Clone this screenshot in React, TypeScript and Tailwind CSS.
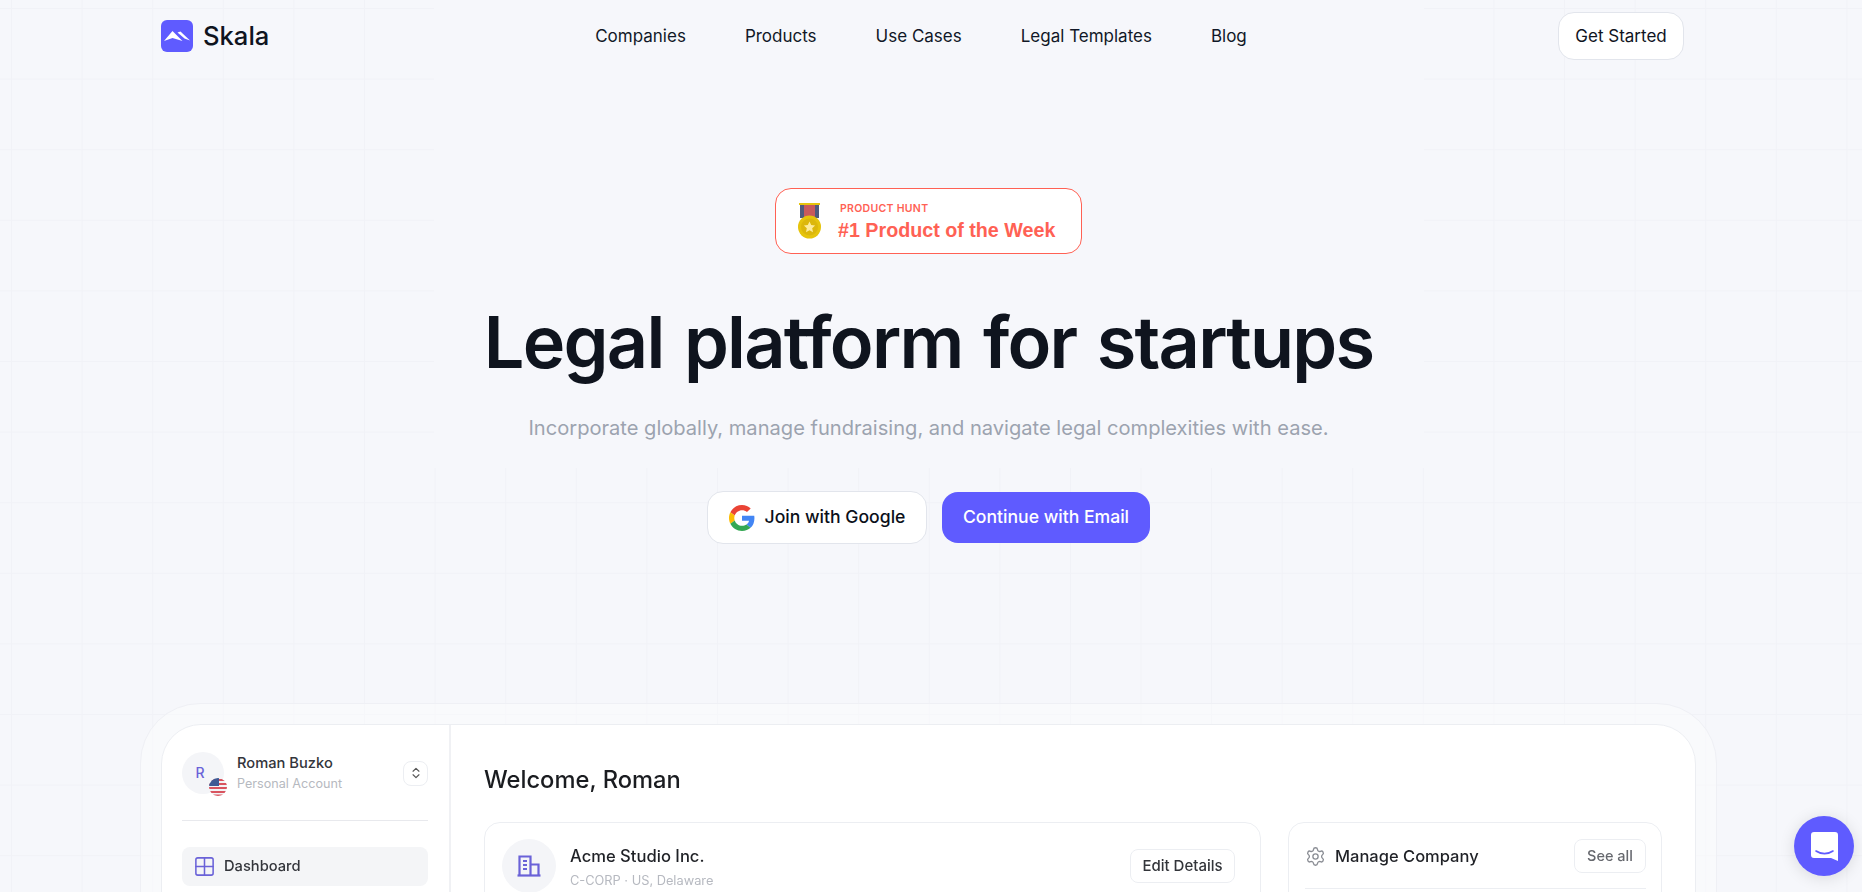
import { ChevronsUpDown, Grid2x2, Settings } from "lucide-react";

const navLinks = ["Companies", "Products", "Use Cases", "Legal Templates", "Blog"];

function Logo() {
  return (
    <svg width="32" height="32" viewBox="0 0 32 32">
      <rect width="32" height="32" rx="6" fill="#5f5bff" />
      <path d="M3 21 L11.5 11 L21.5 21 L11.5 18 Z" fill="#fff" />
      <path d="M16.5 12.5 L19.5 11.5 L29 20.5 L23.5 18.5 Z" fill="#fff" />
    </svg>
  );
}

function Medal() {
  return (
    <svg width="24" height="36" viewBox="0 0 24 36">
      <rect x="1" y="0" width="21" height="2" fill="#e6c40c" />
      <rect x="2" y="2" width="19" height="13" fill="#4f5b7d" />
      <rect x="6" y="2" width="11" height="13" fill="#c95a5c" />
      <circle cx="11.5" cy="24" r="11.5" fill="#e6c40c" />
      <circle cx="11.5" cy="24" r="8.5" fill="#dcb70b" />
      <path d="M11.5 18.5l1.7 3.6 3.9.5-2.9 2.7.8 3.9-3.5-2-3.5 2 .8-3.9-2.9-2.7 3.9-.5z" fill="#fdeb9a" />
    </svg>
  );
}

function GoogleIcon() {
  return (
    <svg width="26" height="26" viewBox="0 0 48 48">
      <path fill="#EA4335" d="M24 9.5c3.54 0 6.71 1.22 9.21 3.6l6.85-6.85C35.9 2.38 30.47 0 24 0 14.62 0 6.51 5.38 2.56 13.22l7.98 6.19C12.43 13.72 17.74 9.5 24 9.5z" />
      <path fill="#4285F4" d="M46.98 24.55c0-1.57-.15-3.09-.38-4.55H24v9.02h12.94c-.58 2.96-2.26 5.48-4.78 7.18l7.73 6c4.51-4.18 7.09-10.36 7.09-17.65z" />
      <path fill="#FBBC05" d="M10.53 28.59c-.48-1.45-.76-2.99-.76-4.59s.27-3.14.76-4.59l-7.98-6.19C.92 16.46 0 20.12 0 24c0 3.88.92 7.54 2.56 10.78l7.97-6.19z" />
      <path fill="#34A853" d="M24 48c6.48 0 11.93-2.13 15.89-5.81l-7.73-6c-2.15 1.45-4.92 2.3-8.16 2.3-6.26 0-11.57-4.22-13.47-9.91l-7.98 6.19C6.51 42.62 14.62 48 24 48z" />
    </svg>
  );
}

function Flag() {
  return (
    <svg width="18" height="18" viewBox="0 0 18 18">
      <defs>
        <clipPath id="flag-clip">
          <circle cx="9" cy="9" r="9" />
        </clipPath>
      </defs>
      <g clipPath="url(#flag-clip)">
        <rect width="18" height="18" fill="#f3f4f6" />
        <rect y="1" width="18" height="2" fill="#d9545f" />
        <rect y="5" width="18" height="2" fill="#d9545f" />
        <rect y="9" width="18" height="2" fill="#d9545f" />
        <rect y="13" width="18" height="2" fill="#d9545f" />
        <rect y="16.5" width="18" height="2" fill="#d9545f" />
        <rect width="10" height="8" fill="#3f5a94" />
      </g>
    </svg>
  );
}

function CompanyIcon() {
  return (
    <svg width="24" height="22" viewBox="0 0 24 22" fill="none" stroke="#6a62d8" strokeWidth="2.2">
      <path d="M2.5 21V1.5h11V21" />
      <path d="M13.5 9.5h8V21" />
      <path d="M0.5 20.5h23" />
      <path d="M6 6h4M6 10h4M6 14h4" />
    </svg>
  );
}

export default function App() {
  return (
    <div className="relative h-[892px] overflow-hidden bg-[#f6f7fb] font-['Inter',sans-serif] text-[#0f141e]">
      {/* faint grid behind everything, the block behind the hero text has none */}
      <div className="absolute inset-0 bg-[linear-gradient(to_right,#f1f2f7_1px,transparent_1px),linear-gradient(to_bottom,#f1f2f7_1px,transparent_1px)] bg-[size:70.6px_70.6px] bg-[position:11px_8px]" />
      <div className="absolute left-[434px] top-0 h-[468px] w-[990px] bg-[#f6f7fb]" />

      <div className="relative">
        <header className="flex items-center justify-between h-[72px] pl-[161px] pr-[178px]">
          <div className="flex items-center gap-[10px] w-[297px]">
            <Logo />
            <span className="text-[25.6px] font-medium leading-none">Skala</span>
          </div>
          <nav className="flex items-center gap-[59px] pt-[1px] text-[17px] text-[#111827]">
            {navLinks.map((link) => (
              <a key={link}>{link}</a>
            ))}
          </nav>
          <div className="w-[300px] flex justify-end">
            <button className="h-12 w-[126px] rounded-2xl border border-[#e2e5ec] bg-white pt-[1px] text-[17px]">Get Started</button>
          </div>
        </header>

        <section className="flex flex-col items-center pt-[116px] pr-[5px]">
          <div className="flex items-center h-[66px] w-[307px] rounded-2xl border border-[#ff6154] bg-white pl-[22px]">
            <Medal />
            <div className="ml-[16px] pt-[4px]">
              <div className="ml-[2px] text-[10.5px] font-semibold leading-none tracking-[0.3px] text-[#ff6154]">PRODUCT HUNT</div>
              <div className="mt-[4px] font-['Liberation_Sans',sans-serif] text-[19.7px] font-bold leading-6 text-[#ff6154]">
                #1 Product of the Week
              </div>
            </div>
          </div>

          <h1 className="mt-[48px] text-[72px] font-semibold leading-[80px] tracking-[-1.75px] [word-spacing:4px] text-[#0f141e] [font-feature-settings:'liga'_0,'calt'_0]">
            Legal platform for startups
          </h1>
          <p className="mt-[32px] text-[20.1px] leading-7 text-[#9ca3af]">
            Incorporate globally, manage fundraising, and navigate legal complexities with ease.
          </p>

          <div className="mt-[49px] flex items-center gap-[15px]">
            <button className="flex items-center justify-center gap-[10px] h-[53px] w-[220px] rounded-2xl border border-[#e2e5ec] bg-white text-[17.6px] font-medium text-[#0b0f19]">
              <GoogleIcon />
              Join with Google
            </button>
            <button className="h-[51px] w-[208px] rounded-2xl bg-[#5f5bff] text-[17.6px] font-medium text-white">Continue with Email</button>
          </div>
        </section>

        <section className="mt-[159px] ml-[140px] w-[1577px] rounded-t-[60px] border border-[#eff0f5] bg-white/40 p-5">
          <div className="flex h-[400px] rounded-t-[40px] border border-[#eceef2] bg-white blur-[0.6px]">
            <aside className="w-[289px] border-r-2 border-[#f0f1f4] pl-[20px] pr-[21px] pt-[27px]">
              <div className="flex items-center pb-[26px] border-b border-[#e8e9ed]">
                <div className="relative flex h-[42px] w-[42px] items-center justify-center rounded-full bg-[#f4f5f8] pr-[6px] text-sm font-medium text-[#6a62d8]">
                  R
                  <span className="absolute -bottom-[2px] right-[-3px]">
                    <Flag />
                  </span>
                </div>
                <div className="ml-[13px] flex-1">
                  <div className="text-[14.7px] font-medium leading-5 text-[#33353b]">Roman Buzko</div>
                  <div className="text-[12.6px] leading-[21px] text-[#b6b9c0]">Personal Account</div>
                </div>
                <div className="flex h-[25px] w-[25px] items-center justify-center rounded-lg border border-[#eceef2]">
                  <ChevronsUpDown size={14} className="text-[#555]" />
                </div>
              </div>
              <div className="mt-[26px] flex h-[39px] items-center gap-[8px] rounded-lg bg-[#f4f5f7] px-[11px] text-[14.7px] font-medium text-[#33353b]">
                <Grid2x2 size={23} strokeWidth={1.6} className="text-[#6a62d8]" />
                Dashboard
              </div>
            </aside>

            <main className="flex-1 px-[33px] pt-[39px]">
              <h2 className="text-[23.7px] font-medium leading-8 text-[#1a1c20]">Welcome, Roman</h2>
              <div className="mt-[26px] flex gap-[27px]">
                <div className="flex w-[777px] h-[200px] rounded-2xl border border-[#eceef2] pl-[17px] pr-[25px] pt-[16px]">
                  <div className="flex h-[54px] w-[54px] items-center justify-center rounded-full bg-[#f4f5f8]">
                    <CompanyIcon />
                  </div>
                  <div className="ml-[14px] mt-[5px] flex-1">
                    <div className="text-[16.6px] font-medium leading-6 text-[#1f2126]">Acme Studio Inc.</div>
                    <div className="mt-[3px] text-[12.8px] leading-5 text-[#b6b9c0]">C-CORP · US, Delaware</div>
                  </div>
                  <button className="mt-[10px] h-[34px] w-[105px] rounded-lg border border-[#eceef2] text-[15px] font-medium text-[#33353a]">
                    Edit Details
                  </button>
                </div>

                <div className="w-[374px] h-[200px] rounded-2xl border border-[#eceef2] pl-[16px] pr-[15px] pt-[16px]">
                  <div className="flex items-center border-b border-[#eceef2] pb-[15px]">
                    <Settings size={21} strokeWidth={1.5} className="text-[#8a8d94]" />
                    <span className="ml-[9px] flex-1 text-[16.5px] font-medium text-[#1f2126]">Manage Company</span>
                    <button className="h-[34px] w-[72px] rounded-lg border border-[#eceef2] text-[14.5px] font-medium text-[#66686e]">See all</button>
                  </div>
                </div>
              </div>
            </main>
          </div>
        </section>
      </div>

      <button className="fixed right-2 bottom-4 flex h-[60px] w-[60px] items-center justify-center rounded-full bg-[#5f5bff] shadow-[0_2px_16px_rgba(0,0,0,0.12)]">
        <svg width="27" height="29" viewBox="0 0 27 29">
          <path d="M3 0h21a3 3 0 0 1 3 3v26l-7-3H3a3 3 0 0 1-3-3V3a3 3 0 0 1 3-3z" fill="#fff" />
          <path d="M5 19c5 3.5 12 3.5 17 0" fill="none" stroke="#5f5bff" strokeWidth="1.6" strokeLinecap="round" />
        </svg>
      </button>
    </div>
  );
}
